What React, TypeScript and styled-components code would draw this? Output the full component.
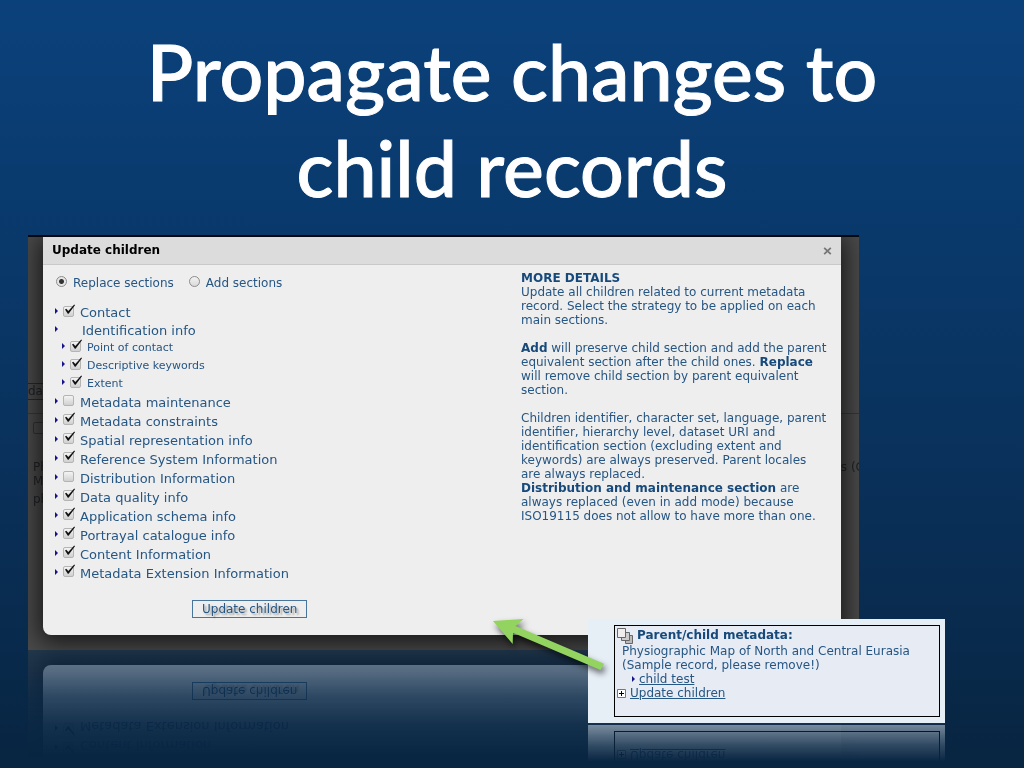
import React, { useId, useState } from "react";
import styled, { createGlobalStyle } from "styled-components";

const GlobalStyle = createGlobalStyle`
  * { box-sizing: border-box; }
  body {
    margin: 0;
    background: #082541;
    font-family: "DejaVu Sans", Verdana, sans-serif;
    font-size: 12px;
    line-height: 14px;
    color: #265684;
  }
`;

const Slide = styled.main`
  min-height: 100vh;
  overflow: hidden;
  background: linear-gradient(to bottom, #0b417b 0%, #093869 35%, #092e55 70%, #082541 100%);
`;

const Title = styled.h1`
  margin: 0 auto;
  padding: 23px 0 20px;
  max-width: 800px;
  text-align: center;
  color: #fff;
  font-family: Lato, sans-serif;
  font-size: 77px;
  font-weight: 500;
  line-height: 96px;
  -webkit-text-stroke: 1px #fff;
`;

const Stage = styled.section`
  position: relative;
  margin: 0 165px 118px 28px;
`;

const Screenshot = styled.div`
  display: grid;
  background: #4a4a4b;
  border-top: 2px solid #05080f;
  -webkit-box-reflect: below 0 linear-gradient(
    to bottom,
    transparent 74%,
    rgba(0, 0, 0, 0.05) 82%,
    rgba(0, 0, 0, 0.17) 89%,
    rgba(0, 0, 0, 0.34) 95%,
    rgba(0, 0, 0, 0.42) 100%
  );
`;

const DimmedPage = styled.div`
  grid-area: 1 / 1;
  overflow: hidden;
  padding-top: 146px;
  color: #202326;
`;

const DimmedTab = styled.div`
  width: 60px;
  height: 17px;
  border: 1px solid #26282a;
  border-left: 0;
  line-height: 15px;
`;

const DimmedPanel = styled.div`
  margin: 13px -5px 0 0;
  padding: 8px 0 0 5px;
  border-top: 1px solid #35383a;
`;

const DimmedBox = styled.div`
  width: 12px;
  height: 12px;
  margin-bottom: 26px;
  border: 1px solid #303234;
  border-radius: 2px;
`;

const DimmedLine = styled.div<{ $gap?: boolean }>`
  display: flex;
  justify-content: space-between;
  margin-top: ${(p) => (p.$gap ? 4 : 0)}px;
`;

const Dialog = styled.div`
  grid-area: 1 / 1;
  margin: 0 18px 15px 15px;
  z-index: 1;
  background: #eee;
  border-radius: 0 0 8px 8px;
  box-shadow: 0 4px 24px 4px rgba(0, 0, 0, 0.7);
  clip-path: inset(0 -18px -15px -15px);
`;

const DialogHeader = styled.header`
  display: flex;
  align-items: center;
  justify-content: space-between;
  height: 28px;
  padding: 0 9px;
  background: #dcdcdc;
  border-bottom: 1px solid #c9c9c9;
`;

const DialogTitle = styled.h2`
  margin: 0 0 2px;
  color: #000;
  font-size: 12px;
  line-height: 14px;
`;

const CloseButton = styled.button`
  display: flex;
  padding: 0;
  border: 0;
  background: none;
`;

const DialogBody = styled.div`
  display: flex;
  padding: 6px 12px 17px 8px;
`;

const Options = styled.form`
  flex: 1;
  min-width: 0;
  padding: 3px 0 0 4px;
`;

const Strategy = styled.div`
  display: flex;
  gap: 15px;
  height: 18px;
  margin-bottom: 12px;
  padding-left: 1px;
`;

const Choice = styled.label`
  display: flex;
  align-items: center;
  gap: 6px;
`;

const Radio = styled.input`
  appearance: none;
  width: 11px;
  height: 11px;
  margin: 0 0 3px;
  border: 1px solid #8c8c8c;
  border-radius: 50%;
  background: linear-gradient(#f2f2f2, #dadada);
  &:checked {
    background: radial-gradient(circle, #333 0 2px, #e6e6e6 3px);
  }
`;

const List = styled.ul`
  list-style: none;
  margin: 0;
  padding: 0;
`;

const Row = styled.li<{ $small?: boolean; $height: number }>`
  display: flex;
  align-items: center;
  height: ${(p) => p.$height}px;
  padding-left: ${(p) => (p.$small ? 7 : 0)}px;
  font-size: ${(p) => (p.$small ? 11 : 13)}px;
`;

const Arrow = styled.svg`
  flex: none;
  margin: 0 5px 4px 0;
`;

const TickWrap = styled.span`
  position: relative;
  display: flex;
  margin: 0 6px 4px 0;
`;

const TickBox = styled.input`
  appearance: none;
  width: 11px;
  height: 11px;
  margin: 0;
  border: 1px solid #b4b4b4;
  border-radius: 2px;
  background: linear-gradient(#f4f4f4, #d0d0d0);
`;

const TickMark = styled.svg`
  position: absolute;
  left: 1px;
  top: -2px;
  pointer-events: none;
`;

const GroupName = styled.span`
  padding-left: 19px;
`;

const SubmitButton = styled.button`
  display: block;
  height: 18px;
  margin: 17px 0 0 137px;
  padding: 0 9px;
  border: 1px solid #47759b;
  background: #eee;
  color: #265684;
  font: inherit;
  line-height: 14px;
  text-shadow: 2px 2px 2px rgba(0, 0, 0, 0.35);
`;

const Details = styled.aside`
  width: 308px;

  p { margin: 0 0 14px; }
  strong { color: #174a7b; }
`;

const DetailsTitle = styled.h3`
  margin: 0;
  color: #174a7b;
  font-size: 12px;
  line-height: 14px;
`;

const Callout = styled.aside`
  position: absolute;
  right: -86px;
  bottom: -74px;
  width: 357px;
  padding: 6px 5px 6px 26px;
  background: #e6eef6;
  border-bottom: 1px solid #12304f;
  -webkit-box-reflect: below 0 linear-gradient(
    to bottom,
    transparent 64%,
    rgba(0, 0, 0, 0.18) 80%,
    rgba(0, 0, 0, 0.5) 100%
  );
`;

const CalloutBox = styled.div`
  height: 92px;
  padding: 1px 2px;
  border: 1px solid #000;
  background: #e6ebf4;
`;

const CalloutTitle = styled.h3`
  display: flex;
  align-items: flex-start;
  gap: 4px;
  height: 17px;
  margin: 0;
  color: #174a7b;
  font-size: 12px;
  line-height: 16px;
`;

const CalloutText = styled.p`
  margin: 0 0 0 5px;
`;

const CalloutItem = styled.div<{ $indent?: boolean }>`
  display: flex;
  align-items: center;
  gap: 4px;
  height: 14px;
  padding-left: ${(p) => (p.$indent ? 15 : 0)}px;
`;

const Link = styled.a`
  color: #265684;
  text-decoration: underline;
`;

const Pointer = styled.svg`
  position: absolute;
  right: 239px;
  bottom: -40px;
  filter: drop-shadow(2px 4px 3px rgba(0, 0, 0, 0.6));
`;

const Marker = () => (
  <Arrow width="3" height="6" viewBox="0 0 3 6" aria-hidden="true">
    <path d="M0 0L3 3L0 6Z" fill="#14148c" />
  </Arrow>
);

type SectionProps = { name: string; checked: boolean; small?: boolean; height?: number };

function Section({ name, checked, small, height = 19 }: SectionProps) {
  const id = useId();
  const [on, setOn] = useState(checked);
  return (
    <Row $small={small} $height={height}>
      <Marker />
      <TickWrap>
        <TickBox id={id} type="checkbox" checked={on} onChange={() => setOn(!on)} />
        {on && (
          <TickMark width="12" height="11" viewBox="0 0 12 11" aria-hidden="true">
            <path d="M1 5.5L2.3 4.8L4.3 7L10.2 0.6L11 1.2L4.6 9.8L3.8 9.8Z" fill="#111" />
          </TickMark>
        )}
      </TickWrap>
      <label htmlFor={id}>{name}</label>
    </Row>
  );
}

const identification = ["Point of contact", "Descriptive keywords", "Extent"];

const sections: [string, boolean][] = [
  ["Metadata maintenance", false],
  ["Metadata constraints", true],
  ["Spatial representation info", true],
  ["Reference System Information", true],
  ["Distribution Information", false],
  ["Data quality info", true],
  ["Application schema info", true],
  ["Portrayal catalogue info", true],
  ["Content Information", true],
  ["Metadata Extension Information", true],
];

export default function App() {
  return (
    <>
      <GlobalStyle />
      <Slide>
        <Title>
          Propagate changes to
          <br />
          child records
        </Title>
        <Stage>
          <Screenshot>
            <DimmedPage aria-hidden="true">
              <DimmedTab>da</DimmedTab>
              <DimmedPanel>
                <DimmedBox />
                <DimmedLine>
                  <span>Ph</span>
                  <span>s (C</span>
                </DimmedLine>
                <DimmedLine>M</DimmedLine>
                <DimmedLine $gap>ph</DimmedLine>
              </DimmedPanel>
            </DimmedPage>
            <Dialog role="dialog" aria-labelledby="dialog-title">
              <DialogHeader>
                <DialogTitle id="dialog-title">Update children</DialogTitle>
                <CloseButton type="button" aria-label="Close">
                  <svg width="9" height="8" viewBox="0 0 9 8">
                    <path d="M1.2 0.8L7.8 7.2M7.8 0.8L1.2 7.2" stroke="#777" strokeWidth="1.8" />
                  </svg>
                </CloseButton>
              </DialogHeader>
              <DialogBody>
                <Options onSubmit={(e) => e.preventDefault()}>
                  <Strategy>
                    <Choice>
                      <Radio type="radio" name="strategy" defaultChecked />
                      Replace sections
                    </Choice>
                    <Choice>
                      <Radio type="radio" name="strategy" />
                      Add sections
                    </Choice>
                  </Strategy>
                  <List>
                    <Section name="Contact" checked height={18} />
                    <Row $height={17}>
                      <Marker />
                      <GroupName>Identification info</GroupName>
                    </Row>
                    {identification.map((name) => (
                      <Section key={name} name={name} checked small height={18} />
                    ))}
                    {sections.map(([name, on]) => (
                      <Section key={name} name={name} checked={on} />
                    ))}
                  </List>
                  <SubmitButton type="submit">Update children</SubmitButton>
                </Options>
                <Details>
                  <DetailsTitle>MORE DETAILS</DetailsTitle>
                  <p>
                    Update all children related to current metadata record. Select the strategy to
                    be applied on each main sections.
                  </p>
                  <p>
                    <strong>Add</strong> will preserve child section and add the parent equivalent
                    section after the child ones. <strong>Replace</strong> will remove child section
                    by parent equivalent section.
                  </p>
                  <p>
                    Children identifier, character set, language, parent identifier, hierarchy
                    level, dataset URI and identification section (excluding extent and keywords)
                    are always preserved. Parent locales are always replaced.
                    <br />
                    <strong>Distribution and maintenance section</strong> are always replaced (even
                    in add mode) because ISO19115 does not allow to have more than one.
                  </p>
                </Details>
              </DialogBody>
            </Dialog>
          </Screenshot>
          <Callout>
            <CalloutBox>
              <CalloutTitle>
                <svg width="16" height="17" viewBox="0 0 16 17" aria-hidden="true">
                  <g stroke="#666">
                    <path d="M8.5 8.5H15.5V16.5H8.5Z" fill="#bbb" />
                    <path d="M4.5 5.5H12.5V13.5H4.5Z" fill="#ccc" />
                    <path d="M0.5 1.5H8.5V10.5H0.5Z" fill="#eee" />
                  </g>
                </svg>
                Parent/child metadata:
              </CalloutTitle>
              <CalloutText>
                Physiographic Map of North and Central Eurasia
                <br />
                (Sample record, please remove!)
              </CalloutText>
              <CalloutItem $indent>
                <svg width="3" height="6" viewBox="0 0 3 6" aria-hidden="true">
                  <path d="M0 0L3 3L0 6Z" fill="#14148c" />
                </svg>
                <Link href="#child-test">child test</Link>
              </CalloutItem>
              <CalloutItem>
                <svg width="9" height="9" viewBox="0 0 9 9" aria-hidden="true">
                  <path d="M0.5 0.5H8.5V8.5H0.5Z" fill="#fff" stroke="#777" />
                  <path d="M2 4.5H7M4.5 2V7" stroke="#000" />
                </svg>
                <Link href="#update-children">Update children</Link>
              </CalloutItem>
            </CalloutBox>
          </Callout>
          <Pointer width="130" height="75" viewBox="490 615 130 75" overflow="visible" aria-hidden="true">
            <path
              d="M493 621L523.5 619L515.5 626L604 663.7L600.5 670L513 632.7L512.7 644Z"
              fill="#93d461"
            />
          </Pointer>
        </Stage>
      </Slide>
    </>
  );
}
